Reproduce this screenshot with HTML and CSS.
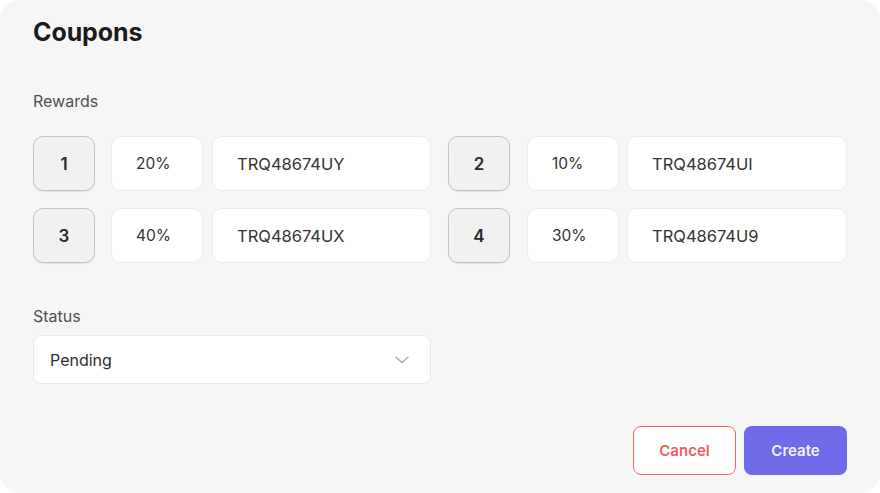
FILE: index.html
```html
<!DOCTYPE html>
<html>
<head>
<meta charset="utf-8">
<link rel="stylesheet" href="styles.css">
</head>
<body>
<div class="panel">
  <h1 class="title">Coupons</h1>
  <div class="label rewards-label">Rewards</div>
  <div class="rewards">
    <div class="reward">
      <div class="num">1</div>
      <div class="field pct">20%</div>
      <div class="field code">TRQ48674UY</div>
    </div>
    <div class="reward">
      <div class="num">2</div>
      <div class="field pct">10%</div>
      <div class="field code">TRQ48674UI</div>
    </div>
    <div class="reward">
      <div class="num">3</div>
      <div class="field pct">40%</div>
      <div class="field code">TRQ48674UX</div>
    </div>
    <div class="reward">
      <div class="num">4</div>
      <div class="field pct">30%</div>
      <div class="field code">TRQ48674U9</div>
    </div>
  </div>
  <div class="label status-label">Status</div>
  <div class="select">
    <span>Pending</span>
    <svg class="chev" width="14" height="8" viewBox="0 0 14 8"><path d="M1 1.2 L7 6.5 L13 1.2" fill="none" stroke="#a8a8a8" stroke-width="1.4" stroke-linecap="round" stroke-linejoin="round"/></svg>
  </div>
  <div class="actions">
    <button class="btn cancel">Cancel</button>
    <button class="btn create">Create</button>
  </div>
</div>
</body>
</html>
```
FILE: styles.css
```css
* { box-sizing: border-box; }
html, body { margin: 0; padding: 0; background: #ffffff; }
body { font-family: Inter, "Noto Sans", sans-serif; }
.panel {
  width: 880px;
  height: 493px;
  background: #f6f6f6;
  border-radius: 20px;
  padding: 17px 33px 18px 33px;
  display: flex;
  flex-direction: column;
}
.title {
  margin: 0;
  font-size: 25px;
  line-height: 30px;
  font-weight: 700;
  color: #1b1b1b;
  letter-spacing: -0.1px;
}
.label {
  font-size: 16px;
  line-height: 20px;
  color: #4f4f4f;
}
.rewards-label { margin-top: 44px; }
.rewards {
  margin-top: 25px;
  display: grid;
  grid-template-columns: 398px 399px;
  column-gap: 17px;
  row-gap: 17px;
}
.reward {
  display: flex;
  height: 55px;
}
.num {
  width: 62px;
  flex: none;
  background: #f1f1f1;
  border: 1px solid #c2c2c2;
  border-radius: 10px;
  box-shadow: 0 1px 1px rgba(0,0,0,0.08);
  display: flex;
  align-items: center;
  justify-content: center;
  font-size: 17px;
  font-weight: 600;
  color: #2a2a2a;
}
.field {
  background: #ffffff;
  border: 1px solid #ebebeb;
  border-radius: 10px;
  display: flex;
  align-items: center;
  padding-left: 24px;
  font-size: 15.5px;
  color: #333333;
}
.pct { width: 92px; flex: none; margin-left: 16px; }
.code { flex: 1; margin-left: 9px; font-size: 16.5px; }
.reward:nth-child(even) .code { margin-left: 8px; }
.reward:nth-child(even) .pct { margin-left: 17px; }
.status-label { margin-top: 43px; }
.select {
  margin-top: 9px;
  width: 398px;
  height: 49px;
  background: #ffffff;
  border: 1px solid #e8e8e8;
  border-radius: 8px;
  display: flex;
  align-items: center;
  justify-content: space-between;
  padding: 0 21px 0 16px;
  font-size: 16px;
  color: #2e2e2e;
}
.chev { display: block; }
.actions {
  margin-top: auto;
  display: flex;
  justify-content: flex-end;
  gap: 8px;
}
.btn {
  width: 103px;
  height: 49px;
  border-radius: 8px;
  font-family: Inter, "Noto Sans", sans-serif;
  font-size: 15px;
  font-weight: 600;
  cursor: pointer;
}
.cancel {
  background: #ffffff;
  border: 1px solid #f06767;
  color: #f05c5c;
}
.create {
  background: #6e6ae8;
  border: none;
  color: #f3f2ff;
}
```
